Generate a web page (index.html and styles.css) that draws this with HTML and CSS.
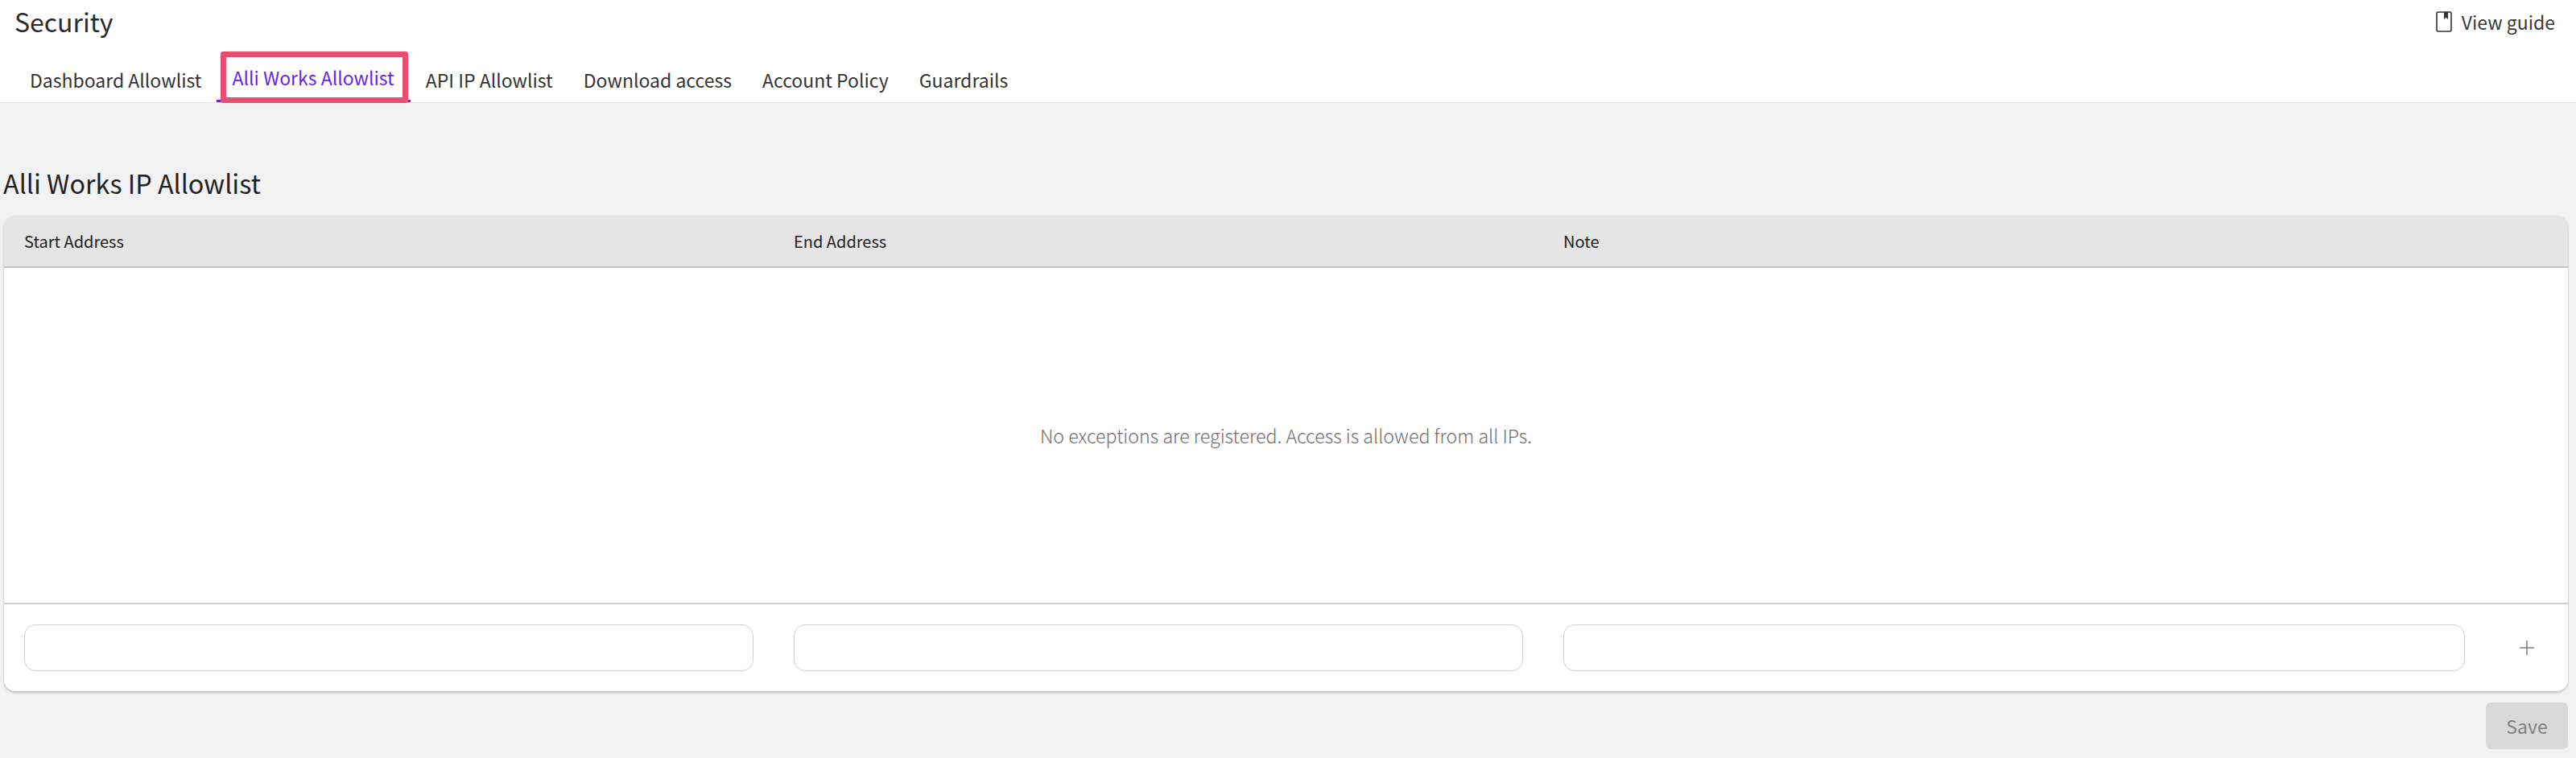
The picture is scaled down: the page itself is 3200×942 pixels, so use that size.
FILE: index.html
```html
<!DOCTYPE html>
<html lang="en">
<head>
    <meta charset="UTF-8">
    <meta name="viewport" content="width=device-width, initial-scale=1.0">
    <title>Security</title>
    <link rel="stylesheet" href="styles.css">
</head>
<body>

<header class="top">
    <div class="title-row">
        <h1>Security</h1>
        <a class="guide" href="#">
            <svg class="guide-icon" width="20" height="26" viewBox="0 0 20 26">
                <rect x="1" y="1" width="18" height="24" rx="2" fill="none" stroke="#333" stroke-width="1.6"/>
                <path d="M10 1h5v9l-2.5-2.2L10 10z" fill="#333"/>
            </svg>
            View guide
        </a>
    </div>
    <nav class="tabs">
        <a class="tab" href="#">Dashboard Allowlist</a>
        <a class="tab active" href="#">Alli Works Allowlist<span class="callout"></span></a>
        <a class="tab" href="#">API IP Allowlist</a>
        <a class="tab" href="#">Download access</a>
        <a class="tab" href="#">Account Policy</a>
        <a class="tab" href="#">Guardrails</a>
    </nav>
</header>

<main class="content">
    <h2>Alli Works IP Allowlist</h2>
    <section class="card">
        <div class="row head">
            <div>Start Address</div>
            <div>End Address</div>
            <div>Note</div>
        </div>
        <div class="empty">No exceptions are registered. Access is allowed from all IPs.</div>
        <div class="row add">
            <input type="text">
            <input type="text">
            <input type="text">
            <svg class="plus" width="18" height="18" viewBox="0 0 18 18">
                <path d="M9 0v18M0 9h18" stroke="#808080" stroke-width="1.6"/>
            </svg>
        </div>
    </section>
    <div class="actions">
        <button class="save">Save</button>
    </div>
</main>

</body>
</html>
```

FILE: styles.css
```css
* {
    box-sizing: border-box;
}

body {
    margin: 0;
    height: 942px;
    overflow: hidden;
    background-color: #f2f2f2;
    color: #2b2b2b;
    font-family: "Noto Sans CJK KR", "Noto Sans", sans-serif;
}

a {
    color: inherit;
    text-decoration: none;
}

.top {
    height: 128px;
    background-color: #fff;
    border-bottom: 1px solid #e2e2e2;
}

.title-row {
    display: flex;
    justify-content: space-between;
    align-items: center;
    height: 54px;
    padding: 0 26px 0 18px;
}

h1 {
    margin: -3px 0 0;
    font-size: 32px;
    font-weight: 400;
}

.guide {
    display: flex;
    align-items: center;
    gap: 12px;
    font-size: 23px;
    color: #3a3a3a;
}

.tabs {
    display: flex;
    height: 73px;
    padding-left: 18px;
}

.tab {
    position: relative;
    display: flex;
    align-items: center;
    padding: 17px 19px 0;
    font-size: 23px;
    color: #333;
}

.tab.active {
    color: #6a1ff0;
    border-bottom: 3px solid #6a1ff0;
    padding: 14px 20px 0 19px;
}

/* annotation box drawn over the selected tab */
.callout {
    position: absolute;
    left: 5px;
    right: 3px;
    top: 10px;
    bottom: -4px;
    border: 7px solid #eb4c72;
    border-radius: 3px;
}

.content {
    padding: 0 10px 0 5px;
}

h2 {
    margin: 0 0 0 -1px;
    padding-top: 78px;
    height: 140px;
    font-size: 32.3px;
    line-height: 42px;
    font-weight: 400;
    color: #222;
}

.card {
    height: 591px;
    display: flex;
    flex-direction: column;
    background-color: #fff;
    border-radius: 14px;
    box-shadow: 0 2px 3px rgba(0, 0, 0, 0.2), 0 0 2px rgba(0, 0, 0, 0.08);
    overflow: hidden;
}

.row {
    display: grid;
    grid-template-columns: 906px 906px 1120px 1fr;
    column-gap: 50px;
    padding-left: 25px;
}

.head {
    height: 65px;
    align-items: center;
    background-color: #e5e5e5;
    border-bottom: 2px solid #c4c4c4;
    font-size: 20px;
    color: #222;
}

.empty {
    flex: 1;
    display: flex;
    align-items: center;
    justify-content: center;
    font-size: 23.2px;
    font-weight: 300;
    color: #6e6e6e;
}

.add {
    height: 110px;
    align-items: center;
    border-top: 2px solid #cfcfcf;
}

.add input {
    width: 100%;
    height: 58px;
    border: 1.5px solid #cfcfcf;
    border-radius: 14px;
    background-color: #fff;
}

.plus {
    justify-self: center;
    margin-left: -24px;
}

.actions {
    display: flex;
    justify-content: flex-end;
    padding-top: 14px;
}

.save {
    width: 102px;
    height: 58px;
    border: none;
    border-radius: 6px;
    background-color: #d9d9d9;
    color: #808080;
    font-family: inherit;
    font-size: 23px;
}
```
